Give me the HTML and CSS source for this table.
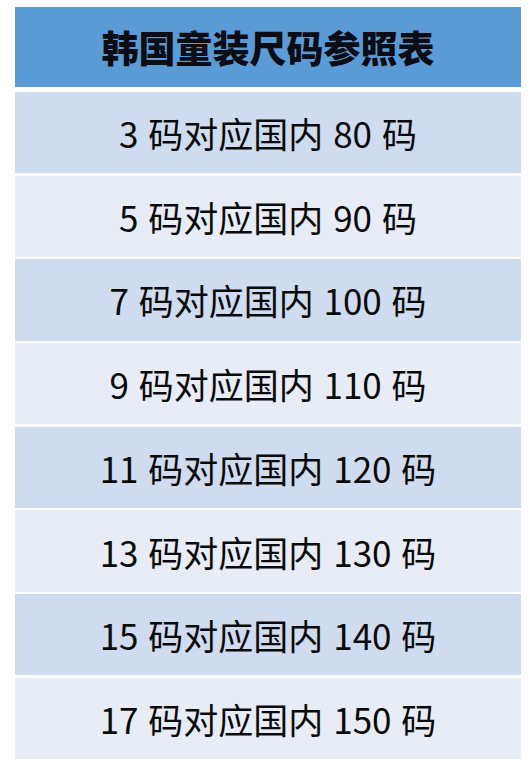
FILE: index.html
```html
<!DOCTYPE html>
<html lang="zh-CN">
<head>
<meta charset="utf-8">
<title>韩国童装尺码参照表</title>
<link rel="stylesheet" href="styles.css">
</head>
<body>
<div class="table">
  <div class="head">韩国童装尺码参照表</div>
  <div class="rows">
    <div class="row odd">3 码对应国内 80 码</div>
    <div class="row even">5 码对应国内 90 码</div>
    <div class="row odd">7 码对应国内 100 码</div>
    <div class="row even">9 码对应国内 110 码</div>
    <div class="row odd">11 码对应国内 120 码</div>
    <div class="row even">13 码对应国内 130 码</div>
    <div class="row odd">15 码对应国内 140 码</div>
    <div class="row even">17 码对应国内 150 码</div>
  </div>
</div>
</body>
</html>
```

FILE: styles.css
```css
html, body {
  margin: 0;
  padding: 0;
  background: #ffffff;
}
body {
  padding: 7px 0 0 15px;
  font-family: "Noto Sans CJK SC", "Noto Sans", sans-serif;
  color: #000;
}
.table {
  width: 506px;
  display: flex;
  flex-direction: column;
  gap: 5px;
}
.head {
  height: 80px;
  background: #5b9bd5;
  display: flex;
  align-items: center;
  justify-content: center;
  font-size: 37px;
  font-weight: 900;
  color: #0c0c14;
}
.rows {
  display: flex;
  flex-direction: column;
  gap: 2.5px;
}
.row {
  height: 81.2px;
  display: flex;
  align-items: center;
  justify-content: center;
  font-size: 35px;
  font-weight: 400;
  word-spacing: 2px;
  color: #0a0a0a;
}
.odd { background: #cfdbee; }
.even { background: #e7ecf6; }
```
